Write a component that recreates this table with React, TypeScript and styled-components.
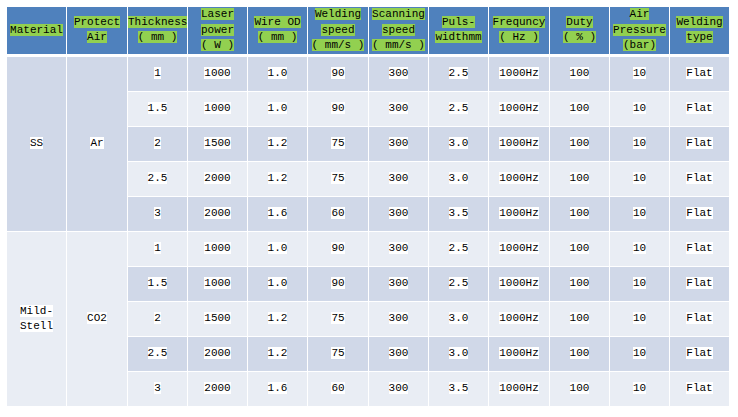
import React from 'react';
import styled, { createGlobalStyle } from 'styled-components';

const GlobalStyle = createGlobalStyle`
  body {
    margin: 0;
    background: #fff;
    font-family: "Liberation Mono", "Noto Sans CJK SC", monospace;
  }
`;

const Page = styled.div`
  padding: 6px 0 0 6px;
`;

const Table = styled.table`
  border-collapse: collapse;
  table-layout: fixed;
  width: 723px;
  font-size: 11px;
  color: #000;
`;

const HeadCell = styled.th`
  background: #4f81bd;
  border: 1px solid #fff;
  border-bottom: 3px solid #fff;
  height: 46px;
  padding: 0;
  font-weight: normal;
  line-height: 15.5px;
  text-align: center;
  vertical-align: middle;
`;

const Mark = styled.span`
  background: #92d050;
  white-space: pre;
  box-decoration-break: clone;
  -webkit-box-decoration-break: clone;
`;

const Cell = styled.td<{ $dark: boolean }>`
  background: ${(p) => (p.$dark ? '#d0d8e8' : '#e9edf4')};
  border: 1px solid #fff;
  height: 34px;
  padding: 0;
  line-height: 15px;
  text-align: center;
  vertical-align: middle;
`;

const Value = styled.span`
  background: #fff;
`;

// full-width brackets of the original are spaced out as "( mm )"
const headers: string[][] = [
  ['Material'],
  ['Protect', 'Air'],
  ['Thickness', '( mm )'],
  ['Laser', 'power', '( W )'],
  ['Wire OD', '( mm )'],
  ['Welding', 'speed', '( mm/s )'],
  ['Scanning', 'speed', '( mm/s )'],
  ['Puls-', 'widthmm'],
  ['Frequncy', '( Hz )'],
  ['Duty', '( % )'],
  ['Air', 'Pressure', '(bar)'],
  ['Welding', 'type'],
];

const widths = [60, 61, 60, 60, 60, 61, 60, 60, 61, 60, 60, 60];

const rows: string[][] = [
  ['1', '1000', '1.0', '90', '300', '2.5', '1000Hz', '100', '10', 'Flat'],
  ['1.5', '1000', '1.0', '90', '300', '2.5', '1000Hz', '100', '10', 'Flat'],
  ['2', '1500', '1.2', '75', '300', '3.0', '1000Hz', '100', '10', 'Flat'],
  ['2.5', '2000', '1.2', '75', '300', '3.0', '1000Hz', '100', '10', 'Flat'],
  ['3', '2000', '1.6', '60', '300', '3.5', '1000Hz', '100', '10', 'Flat'],
];

const groups = [
  { material: ['SS'], gas: 'Ar', dark: true },
  { material: ['Mild-', 'Stell'], gas: 'CO2', dark: false },
];

const App: React.FC = () => {
  let index = 0;
  return (
    <Page>
      <GlobalStyle />
      <Table>
        <colgroup>
          {widths.map((w, i) => (
            <col key={i} style={{ width: w }} />
          ))}
        </colgroup>
        <thead>
          <tr>
            {headers.map((lines, i) => (
              <HeadCell key={i}>
                {lines.map((line, j) => (
                  <React.Fragment key={j}>
                    {j > 0 && <br />}
                    <Mark>{line}</Mark>
                  </React.Fragment>
                ))}
              </HeadCell>
            ))}
          </tr>
        </thead>
        <tbody>
          {groups.map((g, gi) =>
            rows.map((r, ri) => {
              const dark = index % 2 === 0;
              index += 1;
              return (
                <tr key={`${gi}-${ri}`}>
                  {ri === 0 && (
                    <>
                      <Cell $dark={g.dark} rowSpan={rows.length}>
                        {g.material.map((line, j) => (
                          <React.Fragment key={j}>
                            {j > 0 && <br />}
                            <Value>{line}</Value>
                          </React.Fragment>
                        ))}
                      </Cell>
                      <Cell $dark={g.dark} rowSpan={rows.length}>
                        <Value>{g.gas}</Value>
                      </Cell>
                    </>
                  )}
                  {r.map((v, ci) => (
                    <Cell key={ci} $dark={dark}>
                      <Value>{v}</Value>
                    </Cell>
                  ))}
                </tr>
              );
            })
          )}
        </tbody>
      </Table>
    </Page>
  );
};

export default App;
